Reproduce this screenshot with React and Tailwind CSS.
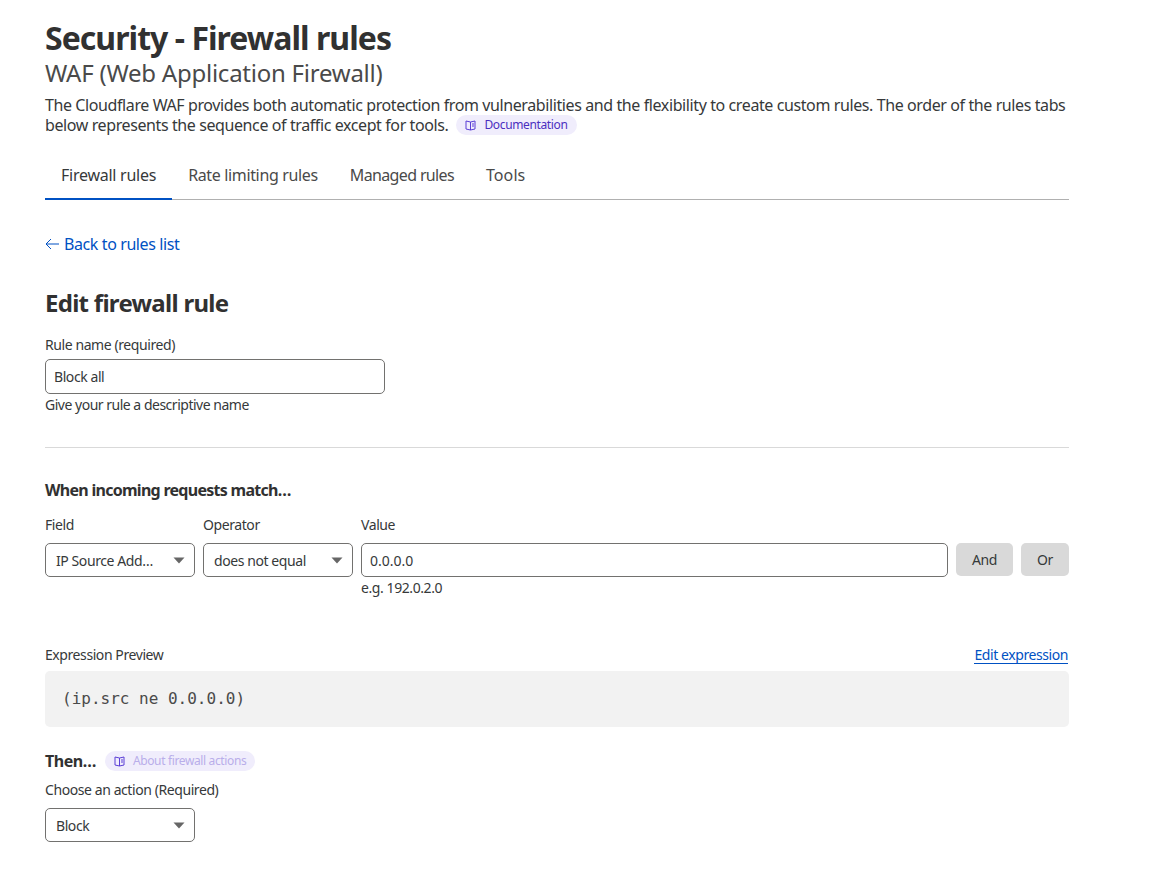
import React from 'react';

const BookIcon = () => (
  <svg width="11" height="11" viewBox="0 0 11 11" fill="none" stroke="#5b3fd6" strokeWidth="1" className="shrink-0">
    <path d="M5.5 2 L1 1 V9 L5.5 10 Z" />
    <path d="M5.5 2 L10 1 V9 L5.5 10" />
    <path d="M7 4 H9 M7 6 H9" />
  </svg>
);

const Caret = () => (
  <svg width="12" height="7" viewBox="0 0 12 7" className="shrink-0">
    <path d="M0.5 0.5 H11.5 L6 6.5 Z" fill="#666" />
  </svg>
);

const Select = ({ value, className }) => (
  <div className={`flex h-[34px] items-center justify-between rounded-[5px] border border-[#72716f] bg-white pl-[10px] pr-[9px] text-[14px] tracking-[-0.03em] ${className}`}>
    <span>{value}</span>
    <Caret />
  </div>
);

const tabs = [
  { label: 'Firewall rules', track: 'tracking-[-0.016em]' },
  { label: 'Rate limiting rules', track: 'tracking-[-0.022em]' },
  { label: 'Managed rules', track: 'tracking-[-0.04em]' },
  { label: 'Tools', track: 'tracking-[0.005em]' },
];

const App = () => {
  return (
    <div className="min-h-[878px] bg-white pl-[45px] pt-[17px] text-[#36393a] font-['Noto_Sans',sans-serif]">
      <div className="w-[1024px]">
        <h1 className="text-[32px] font-bold leading-[42px] tracking-[-0.03em] text-[#313131]">Security - Firewall rules</h1>
        <h2 className="-mt-[1px] text-[24px] leading-[29px] tracking-[-0.01em] text-[#4a4a4a]">WAF (Web Application Firewall)</h2>
        <p className="mt-[8px] text-[16px] leading-[20px] tracking-[-0.025em]">
          The Cloudflare WAF provides both automatic protection from vulnerabilities and the flexibility to create custom rules. The order of the rules tabs below represents the sequence of traffic except for tools.
          <span className="ml-2 inline-flex h-[20px] items-center gap-[8px] rounded-full bg-[#f0edfc] px-[9px] align-top text-[12px] tracking-[-0.03em] text-[#4b2fc0]">
            <BookIcon />
            Documentation
          </span>
        </p>

        <div className="mt-[19px] flex h-[46px] border-b border-[#b0b0b0]">
          {tabs.map((t, i) => (
            <div
              key={t.label}
              className={`-mb-px flex items-center border-b-2 pb-[3px] px-[16px] text-[16px] ${t.track} ${i === 0 ? 'border-[#0051c3] text-[#36393a]' : 'border-transparent text-[#4a4a4a]'}`}
            >
              {t.label}
            </div>
          ))}
        </div>

        <a className="mt-[32px] flex items-center gap-[5px] text-[16px] leading-[24px] tracking-[-0.025em] text-[#0051c3]">
          <svg width="14" height="12" viewBox="0 0 14 12" fill="none" stroke="#0051c3" strokeWidth="1">
            <path d="M14 6 H1 M6 1 L1 6 L6 11" />
          </svg>
          Back to rules list
        </a>

        <h3 className="mt-[32px] text-[24px] font-bold leading-[30px] tracking-[-0.03em] text-[#313131]">Edit firewall rule</h3>

        <label className="mt-[17px] block text-[14px] leading-[20px] tracking-[-0.03em]">Rule name (required)</label>
        <div className="mt-[4px] flex h-[35px] w-[340px] items-center rounded-[5px] border border-[#72716f] px-[8px] text-[14px] tracking-[-0.03em]">Block all</div>
        <p className="mt-[1px] text-[14px] leading-[20px] tracking-[-0.035em]">Give your rule a descriptive name</p>

        <div className="mt-[32px] border-t border-[#d9d9d9]" />

        <h4 className="mt-[32px] text-[16px] font-bold leading-[20px] tracking-[-0.045em] text-[#313131]">When incoming requests match…</h4>

        <div className="mt-[15px] flex gap-[8px]">
          <div className="w-[150px]">
            <div className="text-[14px] leading-[20px] tracking-[-0.03em]">Field</div>
            <Select value="IP Source Add…" className="mt-[8px]" />
          </div>
          <div className="w-[150px]">
            <div className="text-[14px] leading-[20px] tracking-[-0.03em]">Operator</div>
            <Select value="does not equal" className="mt-[8px]" />
          </div>
          <div className="flex-1">
            <div className="text-[14px] leading-[20px] tracking-[-0.03em]">Value</div>
            <div className="mt-[8px] flex h-[34px] items-center rounded-[5px] border border-[#72716f] px-[8px] text-[14px]">0.0.0.0</div>
            <div className="mt-[1px] text-[14px] leading-[20px] tracking-[-0.03em]">e.g. 192.0.2.0</div>
          </div>
          <div className="mt-[28px] flex h-[33px] w-[57px] items-center justify-center rounded-[5px] bg-[#d9d9d9] text-[14px] tracking-[-0.03em]">And</div>
          <div className="mt-[28px] flex h-[33px] w-[48px] items-center justify-center rounded-[5px] bg-[#d9d9d9] text-[14px] tracking-[-0.03em]">Or</div>
        </div>

        <div className="mt-[47px] flex items-end justify-between">
          <span className="text-[14px] leading-[20px] tracking-[-0.03em]">Expression Preview</span>
          <a className="mb-[1px] mr-[1px] border-b border-[#0051c3] text-[14px] leading-[17px] tracking-[-0.03em] text-[#0051c3]">Edit expression</a>
        </div>
        <div className="mt-[6px] flex h-[56px] items-center rounded-[5px] bg-[#f2f2f2] px-[17px] font-['DejaVu_Sans_Mono',monospace] text-[16px] text-[#4a4a4a]">
          (ip.src ne 0.0.0.0)
        </div>

        <div className="mt-[24px] flex items-center gap-[9px]">
          <span className="text-[16px] font-bold leading-[20px] tracking-[-0.03em] text-[#313131]">Then…</span>
          <span className="inline-flex h-[20px] items-center gap-[8px] rounded-full bg-[#f0edfc] px-[9px] text-[12px] tracking-[-0.03em] text-[#b9aeea]">
            <BookIcon />
            About firewall actions
          </span>
        </div>
        <div className="mt-[9px] text-[14px] leading-[20px] tracking-[-0.03em]">Choose an action (Required)</div>
        <Select value="Block" className="mt-[8px] w-[150px]" />
      </div>
    </div>
  );
};

export default App;
